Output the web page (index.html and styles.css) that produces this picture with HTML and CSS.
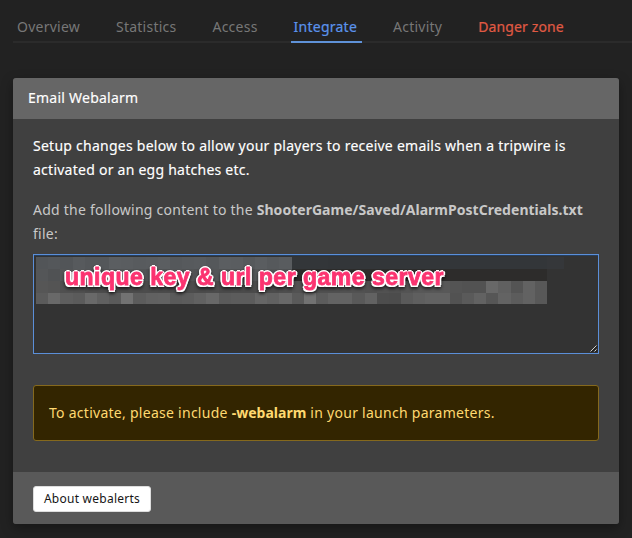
FILE: index.html
```html
<!DOCTYPE html>
<html lang="en">
<head>
<meta charset="utf-8">
<title>Integrate</title>
<link rel="stylesheet" href="styles.css">
</head>
<body>
<nav class="tabs">
  <a class="tab">Overview</a>
  <a class="tab">Statistics</a>
  <a class="tab">Access</a>
  <a class="tab active">Integrate</a>
  <a class="tab">Activity</a>
  <a class="tab danger">Danger zone</a>
</nav>
<section class="card">
  <header class="card-header">Email Webalarm</header>
  <div class="card-body">
    <p class="lead">Setup changes below to allow your players to receive emails when a tripwire is activated or an egg hatches etc.</p>
    <p class="label">Add the following content to the <b>ShooterGame/Saved/AlarmPostCredentials.txt</b> file:</p>
    <div class="field">
      <div class="band"></div>
      <div class="mosaic" id="mosaic"></div>
      <div class="note">unique key &amp; url per game server</div>
      <svg class="grip" width="9" height="9" viewBox="0 0 9 9"><path d="M1.5 7.5l6-6M5.5 7.5l2-2" stroke="#151515" transform="translate(.8 .8)"/><path d="M1.5 7.5l6-6M5.5 7.5l2-2" stroke="#d0d0d0"/></svg>
    </div>
    <div class="alert">To activate, please include <b>-webalarm</b> in your launch parameters.</div>
  </div>
  <footer class="card-footer"><button class="btn">About webalerts</button></footer>
</section>
<script src="mosaic.js"></script>
</body>
</html>
```
FILE: styles.css
```css
* { box-sizing: border-box; }
body {
  margin: 0;
  width: 632px;
  height: 538px;
  overflow: hidden;
  background: #222;
  font: 14px/24px "Noto Sans", sans-serif;
  letter-spacing: .24px;
  color: #fff;
}
b { letter-spacing: .03px; }
.tabs {
  display: flex;
  height: 43px;
  margin-left: 13px;
  padding-top: 15px;
  gap: 28px;
  box-shadow: inset 0 -2px #2b2b2b;
}
.tab { height: 28px; padding: 0 4px; color: #777; white-space: nowrap; }
.tab.active { padding-right: 5px; margin: 0 -1px 0 1px; padding-left: 3px; color: #5b93ec; box-shadow: inset 0 -2px #5f92d8; -webkit-text-stroke: .2px; }
.tab.danger { letter-spacing: .12px; color: #e05a44; -webkit-text-stroke: .2px; }
.card {
  width: 606px;
  height: 446px;
  margin: 35px 0 0 13px;
  border-radius: 3px;
  overflow: hidden;
  background: #404040;
  box-shadow: 0 4px 12px rgba(0, 0, 0, .35);
}
.card-header { height: 41px; padding: 8px 15px; background: #666; -webkit-text-stroke: .15px; }
.card-body { height: 353px; padding: 15px 20px 0; }
p { margin: 0 0 16px; }
.lead { letter-spacing: .25px; -webkit-text-stroke: .15px; }
.label { margin-bottom: 8px; color: #c8c8c8; }
.field {
  position: relative;
  height: 100px;
  padding: 2px;
  border: 1px solid #5b8fd9;
  background: #333;
  box-shadow: inset 0 1px #263e5c;
}
.band { position: absolute; left: 2px; top: 2px; width: 528px; height: 12px; background: #35373a; }
.mosaic {
  position: relative;
  display: grid;
  grid-template-columns: repeat(42, 1fr);
  grid-template-rows: 12px 12px 12px 11px;
  width: 511px;
}
.note {
  position: absolute;
  left: 31px;
  top: 7px;
  font: bold 23px/30px "Liberation Sans", sans-serif;
  letter-spacing: .5px;
  white-space: nowrap;
  color: #fb3370;
  -webkit-text-stroke: .8px #fb3370;
  text-shadow: 2px 0 #fff, -2px 0 #fff, 0 2px #fff, 0 -2px #fff,
    1.5px 1.5px #fff, -1.5px 1.5px #fff, 1.5px -1.5px #fff, -1.5px -1.5px #fff;
  filter: drop-shadow(0 2px 1.5px rgba(0, 0, 0, .6));
}
.grip { position: absolute; right: 0; bottom: 0; fill: none; }
.alert {
  height: 56px;
  margin-top: 31px;
  padding: 15px;
  border: 1px solid #85691d;
  border-radius: 3px;
  background: #332500;
  color: #ffd970;
  letter-spacing: .27px;
}
.card-footer { height: 52px; padding: 14px 20px; background: #595959; }
.btn {
  display: block;
  width: 118px;
  height: 26px;
  padding: 0;
  border: 1px solid #ddd;
  border-radius: 3px;
  background: #fff;
  color: #151515;
  font: 12px/24px "Noto Sans", sans-serif;
  letter-spacing: .25px;
}
```
FILE: mosaic.js
```js
// Cell brightness per row; the upper rows carry a cool tint.
const rows = [
  [85,87,85,90,87,87,94,93,91,92,94,88,90,91,88,94,93,89,93,89,92,54,54,54,53,54,54,54,54,54,54,54,54,54,54,54,54,54,54,54,54,54],
  [86,82,86,90,86,82,84,86,84,82,84,86,84,82,86,84,84,82,86,84,82,44,44,44,44,44,44,44,44,44,44,44,44,44,44,44,44,44,44,44,44,44],
  [86,84,80,79,76,76,75,75,76,76,75,75,76,75,76,74,75,75,76,76,78,82,80,80,80,82,82,80,82,80,84,88,88,88,84,82,82,104,96,84,98,88],
  [91,105,94,91,105,96,90,114,92,97,98,90,92,97,104,90,92,92,102,97,104,90,114,92,99,99,89,98,77,76,90,95,98,98,82,90,98,86,99,92,98,88]
];
const tints = [3, 2, 0, 0];
const host = document.getElementById("mosaic");
rows.forEach((row, y) => row.forEach((v, x) => {
  const cell = document.createElement("i");
  const tint = v < 50 ? -1 : tints[y];
  cell.style.background = `rgb(${v - tint},${v},${v + tint})`;
  host.append(cell);
}));
```
